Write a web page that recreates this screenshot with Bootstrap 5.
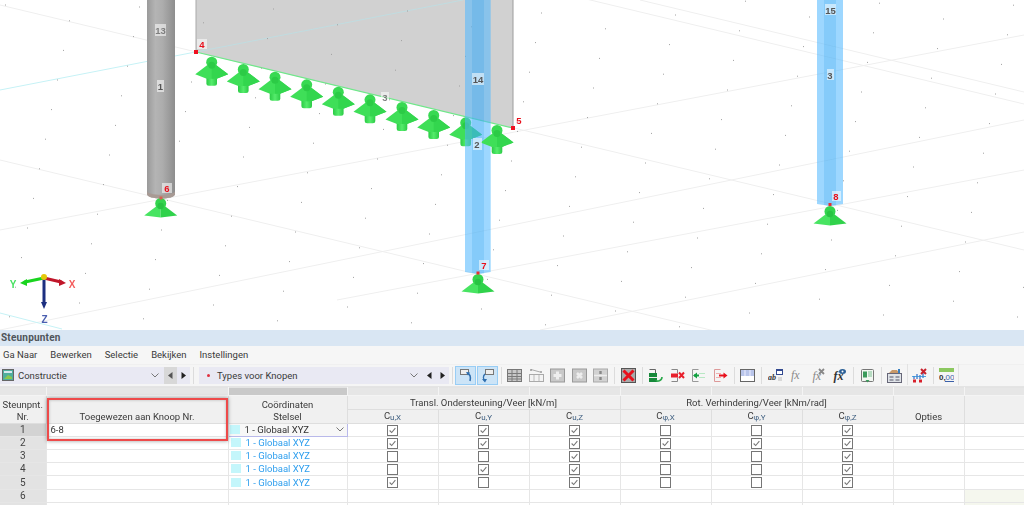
<!DOCTYPE html>
<html lang="nl">
<head>
<meta charset="utf-8">
<title>Steunpunten</title>
<link href="https://cdn.jsdelivr.net/npm/bootstrap@5.3.0/dist/css/bootstrap.min.css" rel="stylesheet">
<style>
html,body{height:505px;overflow:hidden;background:#fff}
body{font-family:Roboto,"Noto Sans",sans-serif;font-size:9.5px;color:#3a3a3a;line-height:12px}
.sheet{width:1024px;height:505px;overflow:hidden;filter:blur(.3px)}
.scene{display:block;width:1024px;height:330px;flex:none}
.scene text{font-family:"Liberation Sans",sans-serif;font-weight:700;text-anchor:middle}
.ml{font-size:9.5px;fill:#555}
.nl{font-size:9.5px;fill:#e8101c}
.lb{fill:#fff;fill-opacity:.55}
.titlebar{height:17px;background:#d9e6f3;padding-left:1px;font-size:10px;font-weight:700;color:#4f545a;line-height:16px;letter-spacing:.2px}
.menubar{height:18px;background:#f6f6f6;padding-left:3px;gap:13px;line-height:18px}
.toolbar{height:23px;background:#f5f5f5;border-bottom:1px solid #e4e4e4;padding:2px 0 3px;border-top:1px solid #f0f0f0}
.combo{background:#e9e9f3;height:17px;line-height:17px}
.combo-a{width:190px;padding-left:2px}
.combo-b{width:250px;padding-left:8px}
.combo-ic{margin-right:4px}
.combo-dot{margin-right:7px}
.chev{flex:none}
.chev-gap{margin-right:5px}
.navbtn{width:13px;height:17px;flex:none;display:flex;align-items:center;justify-content:center}
.navbtn-on{background:#d8d8d8}
.tsep{width:1px;height:17px;background:#dcdcdc;margin:0 2.5px;flex:none}
.tsep-wide{margin:0 5px 0 3px}
.tslot{width:21.5px;height:17px;flex:none;display:flex;align-items:center;justify-content:center}
.tog{width:21px;height:19px;margin:-1px 0;background:#cce4f7;border:1px solid #98cdf5;flex:none;display:flex;align-items:center;justify-content:center}
.tog-next{margin-left:1px}
.tail{width:1px;height:21px;background:#e2e2e2;margin:-2px 0 0 0;flex:none}
.tail-g{margin:-2px 1px 0 1px}
.dt-wrap{flex:none}
table.dt{width:1024px;table-layout:fixed;margin:0;border-color:#e3e3e3;--bs-table-bg:#fff;color:#3a3a3a}
.dt.table>:not(caption)>*>*{padding:0;height:13px;line-height:12px;font-size:9.5px;font-weight:400;text-align:center;vertical-align:middle;border-width:0 1px 1px 0;border-color:#e6e6e6;box-shadow:none;overflow:hidden;white-space:nowrap;background:#fff;color:#3a3a3a}
.dt.table>thead>tr>*{background:#f0f0f0;vertical-align:bottom;border-color:#dedede}
.dt.table>thead>tr.strip>*{height:8px;background:#e6e6e6;border-color:#f4f4f4;line-height:6px;font-size:1px}
.dt.table>thead>tr.strip>.strip-dk{background:#c9c9c9}
.dt.table>thead>tr.gr>*{height:14px}
.dt.table>tbody>tr>.rn{background:#e3e3e3;color:#444;font-size:10px}
.dt.table>tbody>tr>.rn-on{background:#d3d3d3}
.dt.table>tbody>tr>.txt{text-align:left;padding-left:4px;color:#333}
.dt.table>tbody>tr>.co{text-align:left;color:#2f9fee;padding-left:2px}
.dt.table>tbody>tr>.co-on{color:#333;background:#f7f7f7;border:1px solid #b9b9ea;position:relative;padding-left:1px}
.dt.table>tbody>tr>.tint{background:#f5f7ee}
.rowx>*{height:14px!important}
.swatch{display:inline-block;width:10px;height:9px;background:#c4f6fb;margin-right:5px;vertical-align:-1px}
.chev-cell{position:absolute;right:3px;top:3px}
.dt .form-check-input{width:11px;height:11px;margin:0;display:block;margin-inline:auto;border-radius:0;border:1px solid #767676;background-color:#fff;float:none;box-shadow:none}
.dt .form-check-input:checked{background-color:#fff;border-color:#767676;background-image:url("data:image/svg+xml,%3csvg xmlns='http://www.w3.org/2000/svg' viewBox='0 0 11 11'%3e%3cpath fill='none' stroke='%23777' stroke-width='1.3' d='M2 5.5l2.5 2.5L9 2.5'/%3e%3c/svg%3e");background-size:100%}
.sb{font-size:8px;color:#3f5f80;position:relative;top:1px}
.redframe{left:47px;top:11px;width:181px;height:43px;border:2.5px solid #ee4a4a;box-shadow:0 0 4px rgba(0,0,0,.4),inset 0 0 3px rgba(0,0,0,.25);pointer-events:none}
</style>
</head>
<body class="m-0">
<div class="sheet d-flex flex-column">

<svg class="scene" viewBox="0 0 1024 330" xmlns="http://www.w3.org/2000/svg" aria-label="3D-model">
<defs>
<linearGradient id="cyl" x1="0" x2="1" y1="0" y2="0">
<stop offset="0" stop-color="#9a9a9a"/><stop offset=".3" stop-color="#b4b4b4"/><stop offset=".55" stop-color="#adadad"/><stop offset="1" stop-color="#8d8d8d"/>
</linearGradient>
<linearGradient id="stm" x1="0" x2="1" y1="0" y2="0">
<stop offset="0" stop-color="#2bcc45"/><stop offset=".5" stop-color="#55ec6c"/><stop offset="1" stop-color="#2ccb46"/>
</linearGradient>
<g id="lsup">
<rect x="-5.300" y="16" width="10.600" height="13" rx="2.500" fill="url(#stm)"/>
<path d="M0 5L-16.500 17.500-5 22H5L16.500 17.500z" fill="#3fdf58"/>
<path d="M0 5L16.500 17.500 5 22H0z" fill="#33d64e"/>
<circle cx="0" cy="5.500" r="5.500" fill="#38d952"/>
<circle cx="0" cy="8.500" r="3.500" fill="#2ccb46"/>
</g>
<g id="bsup">
<path d="M0 5L-16.500 17.500 0 19.500z" fill="#48e462"/>
<path d="M0 5L16.500 17.500 0 19.500z" fill="#30d24b"/>
<circle cx="0" cy="5.500" r="5.500" fill="#33d44e"/>
<circle cx="0" cy="8" r="3.200" fill="#28c443"/>
</g>
</defs>

<g fill="none" stroke="#efefef" stroke-width="1">
<path d="M0 5L1024 250"/><path d="M0 160L1024 405"/><path d="M340 -60L1024 104"/><path d="M640 0L1024 92"/>
<path d="M0 230L1024 35"/><path d="M0 330L1024 120"/><path d="M337 300L1024 170"/><path d="M540 330L1024 232"/>
</g>
<path d="M0 90L463 0" stroke="#c6f2f6" fill="none"/>
<path d="M0 313L62 329" stroke="#c6f2f6" fill="none"/>

<path d="M196 0H513V128L196 52z" fill="#d1d1d1"/>
<path d="M196 0V52" stroke="#a9a9a9"/><path d="M513 0V128" stroke="#9c9c9c"/>
<path d="M196 52L463 0" stroke="#c0dce0" fill="none"/>
<path d="M196 52L513 128" stroke="#6fe88a" stroke-width="1.2" fill="none"/>
<path id="dots" d="" stroke="#a0a0a0" stroke-width="1" fill="none"/>

<path d="M147 0H175V194C175 200 147 200 147 194z" fill="url(#cyl)"/>
<path d="M147 191C147 196 175 196 175 191V194C175 200 147 200 147 194z" fill="#a89a94"/>

<use href="#lsup" x="211.7" y="56.7"/><use href="#lsup" x="243.3" y="64"/><use href="#lsup" x="275" y="71.7"/><use href="#lsup" x="306.7" y="79.3"/><use href="#lsup" x="338.3" y="86.7"/><use href="#lsup" x="370" y="94.3"/><use href="#lsup" x="402" y="102"/><use href="#lsup" x="433.7" y="110"/><use href="#lsup" x="465.7" y="117.3"/>

<path d="M465 0H490.7V272L478 274 465 272z" fill="#51b8ff" fill-opacity=".56"/>
<path d="M472 0H484V273.500L478 274 472 273z" fill="#0d91e0" fill-opacity=".16"/>
<use href="#lsup" x="497" y="125"/>

<path d="M817 0H843V204L830 206 817 204z" fill="#51b8ff" fill-opacity=".56"/>
<path d="M824 0H836V205.500L830 206 824 205z" fill="#0d91e0" fill-opacity=".16"/>

<use href="#bsup" x="160.700" y="198"/>
<use href="#bsup" x="478" y="274"/>
<use href="#bsup" x="830" y="206"/>

<rect x="194" y="50" width="4" height="4" fill="#f01020"/><rect x="511" y="126" width="4" height="4" fill="#f01020"/>
<rect x="476.500" y="271.500" width="3" height="3" fill="#e83030"/><rect x="828.500" y="203" width="3" height="3" fill="#e83030"/><rect x="159.500" y="196.500" width="3" height="3" fill="#d86050"/>

<rect class="lb" x="155" y="24" width="11" height="12"/><text class="ml" x="160.500" y="34" fill-opacity=".7">13</text>
<rect class="lb" x="157" y="80" width="7" height="12"/><text class="ml" x="160.500" y="90">1</text>
<rect class="lb" x="472" y="73" width="12" height="12"/><text class="ml" x="478" y="82.500">14</text>
<rect class="lb" x="473" y="138" width="9" height="12"/><text class="ml" x="477" y="147.500">2</text>
<rect class="lb" x="381" y="92" width="8" height="10"/><text class="ml" x="385" y="100.500" fill-opacity=".75">3</text>
<rect class="lb" x="825" y="4" width="11" height="11"/><text class="ml" x="830.500" y="13.500">15</text>
<rect class="lb" x="827" y="69" width="7" height="11"/><text class="ml" x="830" y="78.500">3</text>

<rect class="lb" x="197" y="39" width="10" height="10"/><text class="nl" x="202" y="47.500">4</text>
<rect class="lb" x="514" y="115" width="10" height="10"/><text class="nl" x="519" y="123.500">5</text>
<rect class="lb" x="162" y="183" width="10" height="10"/><text class="nl" x="167" y="192">6</text>
<rect class="lb" x="479" y="260" width="10" height="10"/><text class="nl" x="484" y="268.500">7</text>
<rect class="lb" x="832" y="191" width="9" height="10"/><text class="nl" x="836" y="200">8</text>

<g fill="none" stroke-width="3" stroke-linecap="round">
<path d="M44 278L25 282" stroke="#19d41f"/><path d="M44 278L61 282" stroke="#c0162a"/><path d="M44 278V303" stroke="#1c2f80"/>
</g>
<path d="M20 283l7-4v7z" fill="#19d41f"/><path d="M66 283l-7-4v7z" fill="#c0162a"/><path d="M44 309l-3-7h6z" fill="#1c2f80"/>
<circle cx="44" cy="277" r="3" fill="#e4c80a"/>
<text x="13" y="288" font-size="10" style="fill:#46e060">Y</text>
<text x="72" y="288" font-size="10" style="fill:#f45b5b">X</text>
<text x="44.500" y="323" font-size="10" style="fill:#4b5fb0">Z</text>
</svg>

<div class="titlebar flex-none">Steunpunten</div>
<div class="menubar d-flex flex-none"><span>Ga Naar</span><span>Bewerken</span><span>Selectie</span><span>Bekijken</span><span>Instellingen</span></div>

<div class="toolbar d-flex align-items-center flex-none">
  <div class="combo combo-a d-flex align-items-center flex-none">
    <svg class="combo-ic" width="12" height="12" viewBox="0 0 12 12"><rect x=".5" y=".5" width="11" height="11" fill="#4fae9e" stroke="#666"/><rect x="2" y="2" width="8" height="2" fill="#d8e8f0"/><path d="M2 10l4-4 4 2v2z" fill="#8cc850"/></svg>
    <span class="flex-grow-1">Constructie</span>
    <svg class="chev chev-gap" width="8" height="5" viewBox="0 0 8 5"><path d="M.5.5L4 4 7.500.5" fill="none" stroke="#777"/></svg>
    <span class="navbtn navbtn-on"><svg width="5" height="7" viewBox="0 0 5 7"><path d="M4.500 0v7L0 3.500z" fill="#555"/></svg></span>
    <span class="navbtn"><svg width="5" height="7" viewBox="0 0 5 7"><path d="M.5 0v7L5 3.500z" fill="#222"/></svg></span>
  </div>
  <span class="tsep tsep-wide"></span>
  <div class="combo combo-b d-flex align-items-center flex-none">
    <svg class="combo-dot" width="3" height="3" viewBox="0 0 3 3"><circle cx="1.500" cy="1.500" r="1.500" fill="#e03040"/></svg>
    <span class="flex-grow-1">Types voor Knopen</span>
    <svg class="chev chev-gap" width="8" height="5" viewBox="0 0 8 5"><path d="M.5.5L4 4 7.500.5" fill="none" stroke="#777"/></svg>
    <span class="navbtn"><svg width="5" height="7" viewBox="0 0 5 7"><path d="M4.500 0v7L0 3.500z" fill="#222"/></svg></span>
    <span class="navbtn"><svg width="5" height="7" viewBox="0 0 5 7"><path d="M.5 0v7L5 3.500z" fill="#222"/></svg></span>
  </div>
  <span class="tsep"></span>
  <span class="tog"><svg width="17" height="15" viewBox="0 0 17 15"><rect x="3.500" y="1.500" width="8" height="5" fill="#eee" stroke="#777"/><path d="M10 5c3 1 4 4 3 8" fill="none" stroke="#2f6fb0" stroke-width="1.500"/><path d="M9 4l4 .5-2 3z" fill="#2f6fb0"/></svg></span>
  <span class="tog tog-next"><svg width="17" height="15" viewBox="0 0 17 15"><rect x="6.500" y="1.500" width="8" height="5" fill="#eee" stroke="#777"/><path d="M6 6c-2 2-2 5 0 7" fill="none" stroke="#2f6fb0" stroke-width="1.500"/><path d="M3 11l5 0-2 3.500z" fill="#2f6fb0"/></svg></span>
  <span class="tsep"></span>
  <span class="tslot"><svg width="15" height="15" viewBox="0 0 15 15"><rect x=".5" y="1.500" width="14" height="12" fill="#c8c8c8" stroke="#777"/><path d="M1 5.500h13M1 8.500h13M1 11h13M5 2v11M10 2v11" stroke="#7a7a7a"/></svg></span>
  <span class="tslot"><svg width="15" height="15" viewBox="0 0 15 15"><rect x=".5" y="6.500" width="14" height="7" fill="#f3f3f3" stroke="#aaa"/><path d="M5 7v6M10 7v6" stroke="#bbb"/><path d="M2 1.500l9 2.500" stroke="#aaa"/><circle cx="2" cy="2" r="1" fill="#999"/><circle cx="12" cy="4" r="1" fill="#999"/></svg></span>
  <span class="tslot"><svg width="15" height="15" viewBox="0 0 15 15"><rect x=".5" y="1" width="14" height="13" fill="#c9c9c9" stroke="#999"/><path d="M7.500 3.500v8M3.500 7.500h8" stroke="#eee" stroke-width="3"/></svg></span>
  <span class="tslot"><svg width="15" height="15" viewBox="0 0 15 15"><rect x=".5" y="1" width="14" height="13" fill="#c9c9c9" stroke="#999"/><path d="M5 5l5 5M10 5l-5 5" stroke="#eee" stroke-width="2.600"/></svg></span>
  <span class="tslot"><svg width="15" height="15" viewBox="0 0 15 15"><rect x=".5" y="1" width="14" height="13" fill="#d2d2d2" stroke="#aaa"/><path d="M7.500 3v3M7.500 9v3" stroke="#888" stroke-width="2.400"/><path d="M1 7.500h13" stroke="#eee" stroke-width="1.500"/></svg></span>
  <span class="tsep"></span>
  <span class="tslot"><svg width="15" height="15" viewBox="0 0 15 15"><rect x=".5" y=".5" width="14" height="14" fill="#aaa" stroke="#555"/><path d="M2.500 2.500l10 10M12.500 2.500l-10 10" stroke="#e8101c" stroke-width="3"/></svg></span>
  <span class="tsep"></span>
  <span class="tslot"><svg width="15" height="15" viewBox="0 0 15 15"><path d="M1.500 1.500h6v4" fill="none" stroke="#666"/><rect x="1" y="5" width="8" height="9" fill="#17893a"/><path d="M1 9.500h8" stroke="#eee"/><path d="M14 9c0 4-5 5-6 3" fill="none" stroke="#2aa84a" stroke-width="1.600"/></svg></span>
  <span class="tslot"><svg width="15" height="15" viewBox="0 0 15 15"><path d="M1.500 1.500h6v4M1.500 13.500h6v-4" fill="none" stroke="#888"/><rect x="1" y="5.500" width="7" height="4" fill="#e8202c"/><path d="M9 4.500l5 5.500M14 4.500l-5 5.500" stroke="#e8202c" stroke-width="2"/></svg></span>
  <span class="tslot"><svg width="15" height="15" viewBox="0 0 15 15"><path d="M1.500 1.500h6M1.500 13.500h6M1.500 1.500v12" fill="none" stroke="#999"/><path d="M3 7.500h5" stroke="#12a040" stroke-width="2"/><path d="M2 7.500l4-3v6z" fill="#12a040"/><path d="M8 5.500h6M8 9.500h6" stroke="#b8e8c4"/></svg></span>
  <span class="tslot"><svg width="15" height="15" viewBox="0 0 15 15"><path d="M1.500 1.500h6M1.500 13.500h6M1.500 1.500v12" fill="none" stroke="#d99"/><path d="M3 5.500h5M3 9.500h5" stroke="#f0b0b0"/><path d="M6 7.500h5" stroke="#e8101c" stroke-width="2"/><path d="M14.500 7.500l-4-3v6z" fill="#e8101c"/></svg></span>
  <span class="tsep"></span>
  <span class="tslot"><svg width="15" height="15" viewBox="0 0 15 15"><rect x=".5" y="1.500" width="14" height="12" fill="#fff" stroke="#666"/><rect x="1" y="2" width="13" height="6" fill="#b9c5ea"/><path d="M5 2v6M10 2v6" stroke="#eef"/></svg></span>
  <span class="tsep"></span>
  <span class="tslot"><svg width="15" height="15" viewBox="0 0 15 15"><rect x="8.500" y="1.500" width="6" height="5" fill="#fff" stroke="#334a90"/><rect x="8" y="1" width="7" height="2" fill="#334a90"/><text x="0" y="12" font-family="Liberation Serif" font-style="italic" font-weight="700" font-size="8" fill="#333">ab</text><path d="M10 10h4M10 12h4" stroke="#bbb"/></svg></span>
  <span class="tslot"><svg width="15" height="15" viewBox="0 0 15 15"><text x="2" y="11" font-family="Liberation Serif" font-style="italic" font-size="12" fill="#8a8a8a">fx</text></svg></span>
  <span class="tslot"><svg width="15" height="15" viewBox="0 0 15 15"><text x="1.500" y="12" font-family="Liberation Serif" font-style="italic" font-size="12" fill="#888">fx</text><path d="M8 1l5 5M13 1L8 6" stroke="#888" stroke-width="1.800"/></svg></span>
  <span class="tslot"><svg width="15" height="15" viewBox="0 0 15 15"><text x="1.500" y="12" font-family="Liberation Serif" font-style="italic" font-weight="700" font-size="12" fill="#333">fx</text><ellipse cx="10.500" cy="3.500" rx="3.500" ry="2.500" fill="#2a5f96"/><circle cx="10.500" cy="3.500" r="1" fill="#fff"/></svg></span>
  <span class="tsep"></span>
  <span class="tslot"><svg width="15" height="15" viewBox="0 0 15 15"><rect x="1.500" y="1.500" width="12" height="12" rx="1" fill="#f2f7f2" stroke="#777"/><rect x="3" y="3.500" width="4" height="6" fill="#3a9a5a"/><path d="M8 4h4M8 6h4M8 8h4" stroke="#7abf90"/><path d="M5.500 12h4L7.500 14.500z" fill="#3a9a5a"/></svg></span>
  <span class="tsep"></span>
  <span class="tslot"><svg width="15" height="15" viewBox="0 0 15 15"><rect x=".5" y="5.500" width="14" height="9" fill="#dfe3e8" stroke="#667"/><path d="M2.500 9h4M8.500 9h4M2.500 12h4M8.500 12h4" stroke="#556"/><path d="M2 5l3-3h5l2 3z" fill="#c89868"/><path d="M12 1v4" stroke="#3a7fc0" stroke-width="2"/></svg></span>
  <span class="tail tail-g"></span>
  <span class="tslot"><svg width="15" height="15" viewBox="0 0 15 15"><path d="M2 8v3M5 6v5M8 7v4M11 5v5" stroke="#2f6fc8" stroke-width="1.200"/><path d="M0 8.500h14" stroke="#2f8fd8" stroke-width=".8"/><rect x="1" y="11.500" width="3" height="3" fill="#d8202c"/><rect x="7" y="11.500" width="3" height="3" fill="#d8202c"/><path d="M9 1l5 5M14 1L9 6" stroke="#c8202c" stroke-width="2"/></svg></span>
  <span class="tsep"></span>
  <span class="tslot"><svg width="15" height="15" viewBox="0 0 15 15"><rect x="0" y="0" width="15" height="4" fill="#8cc860"/><text x="0" y="12" font-family="Liberation Sans" font-size="8" fill="#333" font-weight="700">0,</text><text x="6.500" y="12" font-family="Liberation Sans" font-size="8" fill="#3a5fa8">00</text><path d="M6 13.500h9" stroke="#3a5fa8"/></svg></span>
  <span class="tail"></span>
</div>

<div class="dt-wrap position-relative">
<table class="table table-bordered dt">
<colgroup><col style="width:46px"><col style="width:182px"><col style="width:119px"><col style="width:91px"><col style="width:91px"><col style="width:91px"><col style="width:91px"><col style="width:91px"><col style="width:91px"><col style="width:71px"><col style="width:60px"></colgroup>
<thead>
<tr class="strip"><th></th><th></th><th class="strip-dk"></th><th></th><th></th><th></th><th></th><th></th><th></th><th></th><th></th></tr>
<tr class="gr"><th rowspan="2">Steunpnt.<br>Nr.</th><th rowspan="2">Toegewezen aan Knoop Nr.</th><th rowspan="2">Coördinaten<br>Stelsel</th><th colspan="3">Transl. Ondersteuning/Veer [kN/m]</th><th colspan="3">Rot. Verhindering/Veer [kNm/rad]</th><th rowspan="2">Opties</th><th rowspan="2"></th></tr>
<tr><th>C<span class="sb">u,X</span></th><th>C<span class="sb">u,Y</span></th><th>C<span class="sb">u,Z</span></th><th>C<span class="sb">φ,X</span></th><th>C<span class="sb">φ,Y</span></th><th>C<span class="sb">φ,Z</span></th></tr>
</thead>
<tbody>
<tr><td class="rn rn-on">1</td><td class="txt">6-8</td><td class="co co-on"><span class="swatch"></span>1 - Globaal XYZ<svg class="chev-cell" width="8" height="5" viewBox="0 0 8 5"><path d="M.5.5L4 4 7.500.5" fill="none" stroke="#777"/></svg></td><td><input class="form-check-input" type="checkbox" checked aria-label="Cu,X"></td><td><input class="form-check-input" type="checkbox" checked aria-label="Cu,Y"></td><td><input class="form-check-input" type="checkbox" checked aria-label="Cu,Z"></td><td><input class="form-check-input" type="checkbox" aria-label="Cφ,X"></td><td><input class="form-check-input" type="checkbox" aria-label="Cφ,Y"></td><td><input class="form-check-input" type="checkbox" checked aria-label="Cφ,Z"></td><td></td><td></td></tr>
<tr><td class="rn">2</td><td class="txt"></td><td class="co"><span class="swatch"></span>1 - Globaal XYZ</td><td><input class="form-check-input" type="checkbox" checked aria-label="Cu,X"></td><td><input class="form-check-input" type="checkbox" checked aria-label="Cu,Y"></td><td><input class="form-check-input" type="checkbox" checked aria-label="Cu,Z"></td><td><input class="form-check-input" type="checkbox" checked aria-label="Cφ,X"></td><td><input class="form-check-input" type="checkbox" checked aria-label="Cφ,Y"></td><td><input class="form-check-input" type="checkbox" checked aria-label="Cφ,Z"></td><td></td><td></td></tr>
<tr><td class="rn">3</td><td class="txt"></td><td class="co"><span class="swatch"></span>1 - Globaal XYZ</td><td><input class="form-check-input" type="checkbox" aria-label="Cu,X"></td><td><input class="form-check-input" type="checkbox" aria-label="Cu,Y"></td><td><input class="form-check-input" type="checkbox" checked aria-label="Cu,Z"></td><td><input class="form-check-input" type="checkbox" aria-label="Cφ,X"></td><td><input class="form-check-input" type="checkbox" aria-label="Cφ,Y"></td><td><input class="form-check-input" type="checkbox" checked aria-label="Cφ,Z"></td><td></td><td></td></tr>
<tr><td class="rn">4</td><td class="txt"></td><td class="co"><span class="swatch"></span>1 - Globaal XYZ</td><td><input class="form-check-input" type="checkbox" aria-label="Cu,X"></td><td><input class="form-check-input" type="checkbox" checked aria-label="Cu,Y"></td><td><input class="form-check-input" type="checkbox" checked aria-label="Cu,Z"></td><td><input class="form-check-input" type="checkbox" aria-label="Cφ,X"></td><td><input class="form-check-input" type="checkbox" aria-label="Cφ,Y"></td><td><input class="form-check-input" type="checkbox" checked aria-label="Cφ,Z"></td><td></td><td></td></tr>
<tr class="rowx"><td class="rn">5</td><td class="txt"></td><td class="co"><span class="swatch"></span>1 - Globaal XYZ</td><td><input class="form-check-input" type="checkbox" checked aria-label="Cu,X"></td><td><input class="form-check-input" type="checkbox" aria-label="Cu,Y"></td><td><input class="form-check-input" type="checkbox" checked aria-label="Cu,Z"></td><td><input class="form-check-input" type="checkbox" aria-label="Cφ,X"></td><td><input class="form-check-input" type="checkbox" aria-label="Cφ,Y"></td><td><input class="form-check-input" type="checkbox" checked aria-label="Cφ,Z"></td><td></td><td></td></tr>
<tr><td class="rn">6</td><td></td><td></td><td></td><td></td><td></td><td></td><td></td><td></td><td></td><td class="tint"></td></tr>
<tr><td class="rn"></td><td></td><td></td><td></td><td></td><td></td><td></td><td></td><td></td><td></td><td class="tint"></td></tr>
</tbody>
</table>
<div class="redframe position-absolute"></div>
</div>
</div>
<script>
var d='';
for(var i=-12;i<30;i++){for(var j=-12;j<30;j++){
  var x=273+64*i+70*j, y=9+15.8*i-13.8*j;
  if(x>=0&&x<1024&&y>=0&&y<328){d+='M'+x.toFixed(1)+' '+y.toFixed(1)+'h1';}
}}
document.getElementById('dots').setAttribute('d',d);
</script>
<script src="https://cdn.jsdelivr.net/npm/bootstrap@5.3.0/dist/js/bootstrap.bundle.min.js"></script>
</body>
</html>
